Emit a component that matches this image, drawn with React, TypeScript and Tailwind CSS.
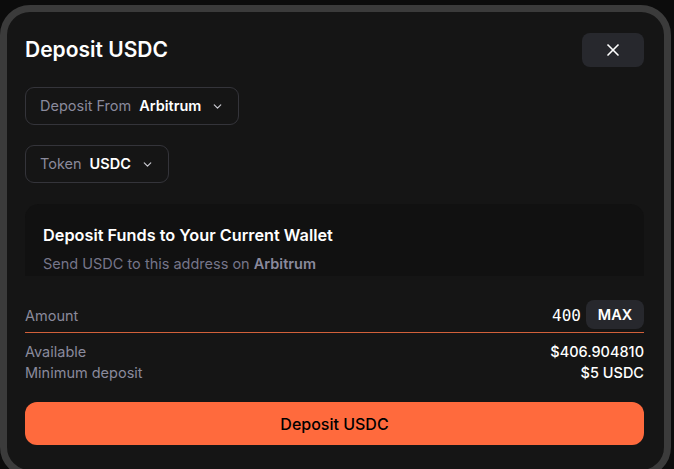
import React from "react";
import { ChevronDown, X } from "lucide-react";

const Selector: React.FC<{ label: string; value: string }> = ({ label, value }) => {
  return (
    <button className="flex h-[38px] items-center rounded-[9px] border border-[#34343a] pl-[14px] pr-[14px] text-[14.5px]">
      <span className="text-[#8a8a9c]">{label}</span>
      <span className="ml-[8px] font-semibold text-white">{value}</span>
      <ChevronDown className="ml-[10px] text-[#c9c9d0]" size={13} strokeWidth={2.2} />
    </button>
  );
};

const App: React.FC = () => {
  return (
    <div
      className="h-[469px] w-[674px] overflow-hidden bg-[#0c0c0c] pt-[5px]"
      style={{ fontFamily: "Inter, 'Noto Sans', sans-serif" }}
    >
      <div className="h-[472px] w-[671px] rounded-[30px] border-[7px] border-[#3b3b3b] bg-[#151515] pt-[21px] pl-[18px] pr-[20px]">
        <div className="flex items-center justify-between">
          <h1 className="text-[21px] font-semibold text-white">Deposit USDC</h1>
          <button className="flex h-[34px] w-[62px] items-center justify-center rounded-[8px] bg-[#27282d] text-white">
            <X size={20} strokeWidth={2} />
          </button>
        </div>

        <div className="mt-[20px] flex">
          <Selector label="Deposit From" value="Arbitrum" />
        </div>
        <div className="mt-[20px] flex">
          <Selector label="Token" value="USDC" />
        </div>

        <div className="mt-[21px] h-[72px] overflow-hidden">
          <div className="h-[140px] rounded-[14px] bg-[#111111] px-[18px] pt-[19px]">
            <div className="text-[16.3px] font-semibold text-white">Deposit Funds to Your Current Wallet</div>
            <div className="mt-[6px] text-[14.5px] text-[#76768a]">
              Send USDC to this address on <span className="font-semibold text-[#8a8a9c]">Arbitrum</span>
            </div>
          </div>
        </div>

        <div className="mt-[24px] flex h-[29px] items-center justify-between">
          <span className="mt-[2px] text-[14.5px] text-[#8a8a9c]">Amount</span>
          <div className="flex items-center">
            <span className="mt-[2px] text-[16px] text-white" style={{ fontFamily: "'DejaVu Sans Mono', monospace" }}>
              400
            </span>
            <button className="ml-[5px] flex h-[29px] w-[58px] items-center justify-center rounded-[8px] bg-[#27282d] text-[14.5px] font-semibold text-white">
              MAX
            </button>
          </div>
        </div>
        <div className="mt-[3px] h-px bg-[#d2603a]" />

        <div className="mt-[8px] flex flex-col text-[14.5px] leading-[21px]">
          <div className="flex justify-between">
            <span className="text-[#8a8a9c]">Available</span>
            <span className="font-medium text-white">$406.904810</span>
          </div>
          <div className="flex justify-between">
            <span className="text-[#8a8a9c]">Minimum deposit</span>
            <span className="font-medium text-white">$5 USDC</span>
          </div>
        </div>

        <button className="mt-[19px] flex h-[43px] w-full items-center justify-center rounded-[12px] bg-[#ff6a3d] text-[16px] font-medium text-black">
          Deposit USDC
        </button>
      </div>
    </div>
  );
};

export default App;
